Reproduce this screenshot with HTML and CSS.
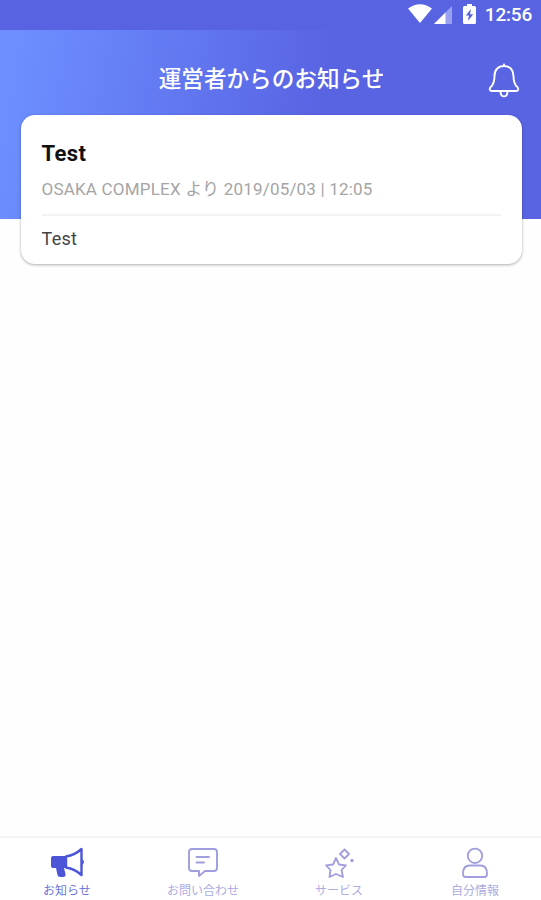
FILE: index.html
```html
<!DOCTYPE html>
<html lang="ja">
<head>
<meta charset="utf-8">
<title>運営者からのお知らせ</title>
<link rel="stylesheet" href="styles.css">
</head>
<body>
<div class="status">
  <svg class="wifi" width="24" height="19" viewBox="0 0 24 19"><path d="M0 4.500Q12-4.200 24 4.500L12 19Z" fill="#fff"/></svg>
  <svg class="signal" width="18" height="18" viewBox="0 0 18 18"><path d="M18 0V18H0Z" fill="#9aa0f0"/><path d="M11.500 6.500V18H0Z" fill="#fff"/></svg>
  <svg class="battery" width="13" height="20" viewBox="0 0 13 20"><path d="M4 0H9V2H11.500Q13 2 13 3.500V18.500Q13 20 11.500 20H1.500Q0 20 0 18.500V3.500Q0 2 1.500 2H4Z" fill="#fff"/><path d="M8 5L2.800 11.500H5.900L5 17L10.200 10.200H7Z" fill="#5662df"/></svg>
  <span class="clock">12:56</span>
</div>
<header class="header">
  <h1 class="title">運営者からのお知らせ</h1>
  <svg class="bell" width="32" height="36" viewBox="0 0 32 36" fill="none" stroke="#fff" stroke-width="1.900" stroke-linejoin="round" stroke-linecap="round"><path d="M16 1.500V3M16 3C10 3 6.500 7 6.500 13C6.500 20 5 22 2.700 24C1 26 1.800 28 4 28H28C30.200 28 31 26 29.300 24C27 22 25.500 20 25.500 13C25.500 7 22 3 16 3ZM12.500 28.500C12.500 35 19.500 35 19.500 28.500"/></svg>
</header>
<main class="content">
  <article class="card">
    <h2 class="card-title">Test</h2>
    <p class="meta">OSAKA COMPLEX より 2019/05/03 | 12:05</p>
    <p class="text">Test</p>
  </article>
</main>
<nav class="tabs">
  <a class="tab active">
    <svg width="36" height="32" viewBox="0 0 36 32"><path d="M4 9H17V21H15L16.500 27Q17 30 14 30H11Q9 30 8.500 28L7 21H4Q2 21 2 19V11Q2 9 4 9Z" fill="#4c55d8"/><path d="M17 9.500Q26 8 32.500 2V28Q26 22 17 20.500Z" fill="#fff" stroke="#4c55d8" stroke-width="2.400" stroke-linejoin="round"/><path d="M33 12Q37 15 33 18Z" fill="#4c55d8"/></svg>
    <span class="label">お知らせ</span>
  </a>
  <a class="tab">
    <svg width="36" height="32" viewBox="0 0 36 32" fill="none" stroke="#a09edd" stroke-width="1.900" stroke-linejoin="round" stroke-linecap="round"><path d="M7 2H29Q32 2 32 5V21Q32 24 29 24H20L14 29V24H7Q4 24 4 21V5Q4 2 7 2ZM11.500 10H24M11.500 15.500H19"/></svg>
    <span class="label">お問い合わせ</span>
  </a>
  <a class="tab">
    <svg width="36" height="32" viewBox="0 0 36 32" fill="none" stroke="#a09edd" stroke-width="1.800" stroke-linejoin="round"><path d="M15 11L18 17.500L25 18.300L20.500 23L22 30L15 27L8.500 30L9.500 23L5 18.300L12 17.500ZM23.500 2.500L28 7L23.500 11.500L19 7Z"/><circle cx="31" cy="13.500" r="1.700" fill="#a09edd" stroke="none"/></svg>
    <span class="label">サービス</span>
  </a>
  <a class="tab">
    <svg width="36" height="32" viewBox="0 0 36 32" fill="none" stroke="#a09edd" stroke-width="1.800" stroke-linejoin="round"><circle cx="18" cy="8.800" r="7.200"/><path d="M12.500 18.500H23.500Q30 18.500 30 27Q30 30 27.500 30H8.500Q6 30 6 27Q6 18.500 12.500 18.500Z"/></svg>
    <span class="label">自分情報</span>
  </a>
</nav>
</body>
</html>
```
FILE: styles.css
```css
* { box-sizing: border-box; }
body {
  margin: 0;
  height: 900px;
  display: flex;
  flex-direction: column;
  overflow: hidden;
  background: #fefefe;
  font-family: Roboto, "Noto Sans CJK JP", sans-serif;
}
h1, h2, p { margin: 0; }
svg { display: block; flex: none; }
.status {
  height: 30px;
  flex: none;
  display: flex;
  align-items: center;
  justify-content: flex-end;
  padding-right: 9px;
  background: #5763e0;
  color: #fff;
}
.wifi { margin-right: 2px; margin-top: -3px; }
.signal { margin-right: 11px; }
.battery { margin-right: 9px; margin-top: -2px; }
.clock { font-size: 19px; font-weight: 500; line-height: 30px; letter-spacing: -0.2px; }
.header {
  height: 189px;
  flex: none;
  display: grid;
  grid-template-columns: 1fr auto 1fr;
  align-items: start;
  padding-right: 21px;
  padding-left: 23px;
  background: linear-gradient(100deg, #6c8eff 4%, #5964e3 58%);
  color: #fff;
}
.title {
  grid-column: 2;
  margin-top: 34px;
  font-size: 22.6px;
  font-weight: 500;
  line-height: 32px;
}
.bell { justify-self: end; margin-top: 33px; }
.content { flex: 1; padding: 0 19px 0 20.5px; }
.card {
  height: 149px;
  margin-top: -104px;
  padding: 24px 21px 0;
  background: #fff;
  border-radius: 14px;
  box-shadow: 0 1px 3px rgba(0, 0, 0, 0.32);
}
.card-title { font-size: 22px; font-weight: 700; line-height: 30px; letter-spacing: 0.4px; color: #111; }
.meta {
  height: 47px;
  padding-top: 8px;
  border-bottom: 2px solid #f3f3f3;
  font-size: 17px;
  line-height: 24px;
  letter-spacing: 0.2px;
  color: #a5a5a5;
  white-space: nowrap;
}
.text { margin-top: 11px; font-size: 18px; line-height: 24px; letter-spacing: 0.3px; color: #444; }
.tabs {
  height: 64px;
  flex: none;
  display: grid;
  grid-template-columns: repeat(4, 136px);
  margin-left: -1px;
  border-top: 2px solid #f3f3f3;
  background: #fff;
}
.tab {
  display: flex;
  flex-direction: column;
  align-items: center;
  padding-top: 9px;
  color: #aeacdf;
}
.active { color: #6e74da; }
.label { margin-top: 4px; font-size: 12px; line-height: 16px; white-space: nowrap; }
```
